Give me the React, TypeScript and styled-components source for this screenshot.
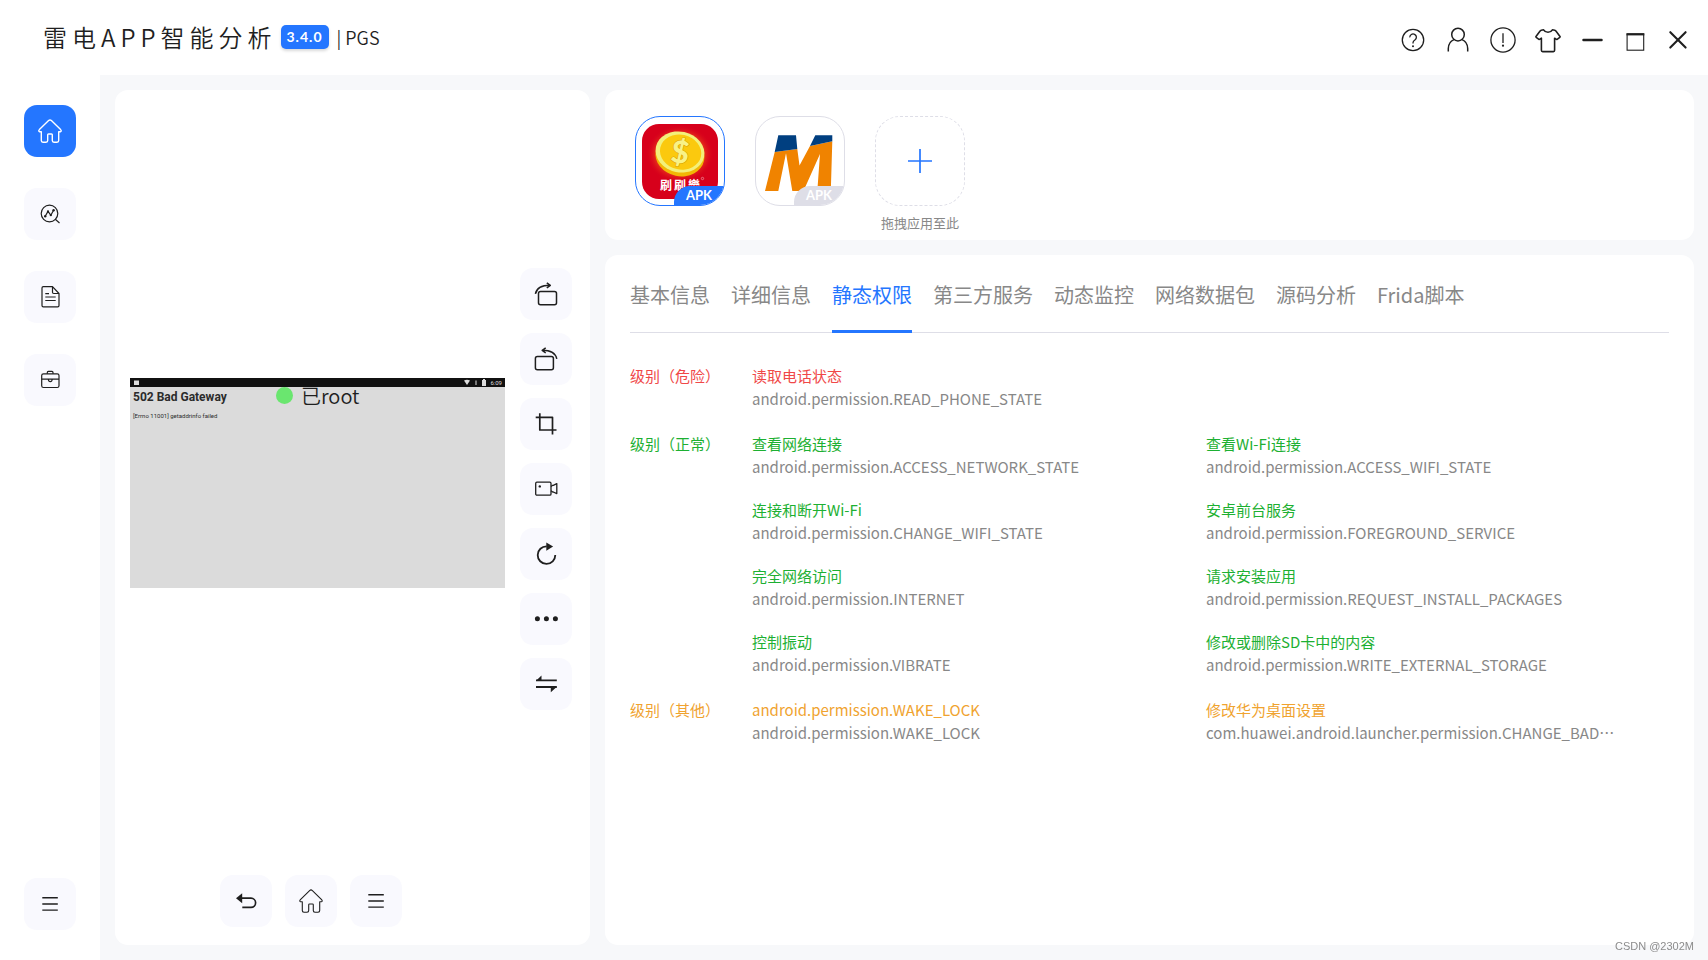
import React from "react";
import styled, { createGlobalStyle, css } from "styled-components";

const GlobalStyle = createGlobalStyle`
  *, *::before, *::after { box-sizing: border-box; }
  body {
    margin: 0;
    background: #fff;
    color: #1f1f1f;
    font-family: "Noto Sans CJK SC", sans-serif;
  }
  button {
    margin: 0;
    padding: 0;
    border: 0;
    background: none;
    color: inherit;
    font: inherit;
    cursor: pointer;
  }
  h1, h2, p, ul, dl, dt, dd { margin: 0; padding: 0; }
  ul { list-style: none; }
  svg { display: block; }
`;

const Window = styled.div`
  display: flex;
  flex-direction: column;
  min-height: 100vh;
`;

/* ---------- header ---------- */

const Header = styled.header`
  display: flex;
  align-items: center;
  justify-content: space-between;
  height: 75px;
  padding: 0 9px 0 43px;
`;

const Brand = styled.div`
  display: flex;
  align-items: center;
  padding-bottom: 2px;
`;

const Title = styled.h1`
  font-size: 24px;
  font-weight: 350;
  line-height: 36px;
  letter-spacing: 5px;
  color: #1f1f1f;
`;

const Version = styled.span`
  height: 24px;
  margin-left: 4px;
  padding: 0 6px;
  border-radius: 5px;
  background: #2476ff;
  box-shadow: 0 2px 3px rgba(0, 0, 0, 0.15);
  color: #fff;
  font-family: Lato, sans-serif;
  font-size: 14px;
  font-weight: 700;
  line-height: 23px;
  letter-spacing: 1px;
`;

const Edition = styled.span`
  margin-left: 8px;
  font-size: 18px;
  font-weight: 350;
  line-height: 24px;
`;

const WindowActions = styled.div`
  display: flex;
  padding-top: 4px;
`;

const WindowButton = styled.button<{ $narrow?: boolean }>`
  display: flex;
  align-items: center;
  justify-content: center;
  width: ${(p) => (p.$narrow ? 43 : 45)}px;
  height: 40px;
`;

/* ---------- frame ---------- */

const Body = styled.div`
  display: flex;
  flex: 1;
`;

const Sidebar = styled.nav`
  display: flex;
  flex-direction: column;
  align-items: center;
  gap: 31px;
  width: 100px;
  padding: 30px 0;
`;

const Tile = styled.button<{ $active?: boolean; $last?: boolean }>`
  display: flex;
  align-items: center;
  justify-content: center;
  width: 52px;
  height: 52px;
  border-radius: 13px;
  background: ${(p) => (p.$active ? "#2476ff" : "#f9f9fe")};
  color: ${(p) => (p.$active ? "#fff" : "#1f1f1f")};
  ${(p) =>
    p.$last &&
    css`
      margin-top: auto;
    `}
`;

const Workspace = styled.main`
  display: flex;
  flex: 1;
  gap: 15px;
  min-width: 0;
  padding: 15px 14px 15px 15px;
  background: #f7f8fa;
`;

const Panel = styled.section`
  border-radius: 13px;
  background: #fff;
`;

/* ---------- device ---------- */

const DevicePanel = styled(Panel)`
  display: flex;
  flex-shrink: 0;
  gap: 15px;
  width: 475px;
  padding: 0 18px 18px 15px;
`;

const DeviceColumn = styled.div`
  display: flex;
  flex: 1;
  flex-direction: column;
`;

const ScreenArea = styled.div`
  display: flex;
  flex: 1;
  align-items: center;
`;

const Screen = styled.div`
  position: relative;
  width: 100%;
  aspect-ratio: 375 / 210;
  background: #dbdbdb;
  color: #2b2b2b;
  font-family: Roboto, sans-serif;
`;

const StatusBar = styled.div`
  display: flex;
  align-items: center;
  gap: 4px;
  height: 9px;
  padding: 0 3px 0 4px;
  background: #111;
  color: #ddd;
  font-size: 6px;
  line-height: 9px;
`;

const StatusSpacer = styled.span`
  flex: 1;
`;

const ErrorTitle = styled.h2`
  padding: 2px 0 0 3px;
  font-size: 12px;
  font-weight: 700;
  line-height: 16px;
`;

const ErrorText = styled.p`
  padding: 7px 0 0 3px;
  font-size: 6px;
  line-height: 8px;
`;

const RootState = styled.div`
  position: absolute;
  top: 4px;
  left: 146px;
  display: flex;
  align-items: center;
  gap: 8px;
  color: #1f1f1f;
  font-family: "Noto Sans CJK SC", sans-serif;
  font-size: 20px;
  font-weight: 350;
  line-height: 28px;
`;

const RootDot = styled.span`
  width: 17px;
  height: 17px;
  border-radius: 50%;
  background: #6ae66f;
`;

const DeviceKeys = styled.div`
  display: flex;
  justify-content: center;
  gap: 13px;
  padding-right: 13px;
`;

const DeviceTools = styled.div`
  display: flex;
  flex-direction: column;
  justify-content: center;
  gap: 13px;
  padding-bottom: 40px;
`;

/* ---------- apps ---------- */

const RightColumn = styled.div`
  display: flex;
  flex: 1;
  flex-direction: column;
  gap: 15px;
  min-width: 0;
`;

const AppsPanel = styled(Panel)`
  display: flex;
  gap: 30px;
  height: 150px;
  padding: 26px 30px 0;
`;

const AppCard = styled.button<{ $selected?: boolean }>`
  position: relative;
  width: 90px;
  height: 90px;
  overflow: hidden;
  border: 1px solid ${(p) => (p.$selected ? "#2476ff" : "#dedee7")};
  border-radius: 25px;
`;

const ApkBadge = styled.span<{ $selected?: boolean }>`
  position: absolute;
  right: 0;
  bottom: 0;
  width: 50px;
  height: 19px;
  padding-right: 12px;
  border-top-left-radius: 16px;
  background: ${(p) => (p.$selected ? "#2476ff" : "#dedee7")};
  color: #fff;
  font-family: Lato, sans-serif;
  font-size: 13px;
  font-weight: 700;
  line-height: 19px;
  text-align: right;
`;

const DropSlot = styled.div`
  display: flex;
  flex-direction: column;
  align-items: center;
  gap: 7px;
  color: #888;
  font-size: 13px;
  line-height: 20px;
`;

const DropButton = styled.button`
  display: flex;
  align-items: center;
  justify-content: center;
  width: 90px;
  height: 90px;
  border: 1px dashed #dedee7;
  border-radius: 25px;
  color: #2476ff;
`;

/* ---------- permissions ---------- */

const InfoPanel = styled(Panel)`
  flex: 1;
  padding: 0 25px 25px;
`;

const Tabs = styled.div`
  display: flex;
  gap: 21px;
  height: 78px;
  border-bottom: 1px solid #dedee7;
`;

const Tab = styled.button<{ $active?: boolean }>`
  height: 78px;
  padding-top: 5px;
  border-bottom: 3px solid ${(p) => (p.$active ? "#2476ff" : "transparent")};
  color: ${(p) => (p.$active ? "#2476ff" : "#888")};
  font-size: 20px;
  line-height: 30px;
  white-space: nowrap;
`;

const Groups = styled.div`
  display: flex;
  flex-direction: column;
  gap: 22px;
  padding-top: 31px;
  font-size: 15px;
  line-height: 23px;
`;

const Group = styled.section<{ $tone: string }>`
  display: grid;
  grid-template-columns: 122px 1fr;
  color: ${(p) => p.$tone};
`;

const GroupLabel = styled.h2`
  font-size: 15px;
  font-weight: 400;
  line-height: 23px;
`;

const Permissions = styled.dl`
  display: grid;
  grid-template-columns: 1fr 1fr;
  row-gap: 20px;
  padding-right: 9px;
`;

const PermissionId = styled.dd`
  color: #888;
`;

const Watermark = styled.footer`
  position: fixed;
  right: 14px;
  bottom: 6px;
  color: #8c8c8c;
  font-family: "Liberation Sans", sans-serif;
  font-size: 11px;
  line-height: 16px;
`;

/* ---------- icons ---------- */

type IconProps = {
  stroke?: number;
  size?: number;
  children: React.ReactNode;
};

const Icon = ({ size = 24, stroke = 1.2, children }: IconProps) => (
  <svg
    width={size}
    height={size}
    viewBox={`0 0 ${size} ${size}`}
    fill="none"
    stroke="currentColor"
    strokeWidth={stroke}
    strokeLinejoin="round"
    aria-hidden="true"
  >
    {children}
  </svg>
);

const HomeIcon = ({ stroke = 1.4 }: { stroke?: number }) => (
  <Icon stroke={stroke}>
    <path d="M10.6 1.6Q12 .3 13.4 1.6L22.6 10.6Q24 12.3 22.4 12.8H20.7V21.5Q20.7 23.2 19 23.2H16Q14.3 23.2 14.3 21.5V15.8Q14.3 15 13.5 15H10.5Q9.7 15 9.7 15.8V21.5Q9.7 23.2 8 23.2H5Q3.3 23.2 3.3 21.5V12.8H1.6Q0 12.3 1.4 10.6Z" />
  </Icon>
);

const AnalyseIcon = () => (
  <Icon>
    <circle cx="11.5" cy="11.5" r="8.3" />
    <path d="M17.3 17.3L21.5 21" />
    <path d="M7.2 14.2L10 9.4L12.8 13.2L15.6 8.2" />
    <g fill="currentColor" stroke="none">
      <circle cx="7.2" cy="14.2" r="1.2" />
      <circle cx="10" cy="9.4" r="1.1" />
      <circle cx="12.8" cy="13.2" r="1.1" />
      <circle cx="15.6" cy="8.2" r="1.2" />
    </g>
  </Icon>
);

const FileIcon = () => (
  <Icon>
    <path d="M14.5 1.7H5.3Q4 1.7 4 3V20.5Q4 21.8 5.3 21.8H19.7Q21 21.8 21 20.5V8.5ZM14.5 1.7V7.3Q14.5 8.5 15.7 8.5H21" />
    <path d="M7.3 8.7H11M7.3 12H17.7M7.3 15.5H17.7" />
  </Icon>
);

const CaseIcon = () => (
  <Icon>
    <rect x="3.7" y="5.8" width="17.3" height="13.7" rx="1.8" />
    <path d="M9.3 5.8V4.4Q9.3 3.4 10.3 3.4H14Q15 3.4 15 4.4V5.8M3.7 11.2H21M10.3 11.2Q10.5 13.6 12.3 13.6Q14 13.6 14.2 11.2" />
  </Icon>
);

const MenuIcon = () => (
  <Icon stroke={1.4}>
    <path d="M4.3 5.8H19.8M4.3 12H19.8M4.3 18.1H19.8" />
  </Icon>
);

const RotateRightIcon = () => (
  <Icon stroke={1.5}>
    <rect x="4.5" y="9.5" width="18" height="13.3" rx="2" />
    <path d="M1.4 11.8Q3.1 3.2 16 3.2M12.8 .8L16.3 3.3L12.8 6" />
  </Icon>
);

const RotateLeftIcon = () => (
  <Icon stroke={1.5}>
    <rect x="1.4" y="9.5" width="18" height="13.3" rx="2" />
    <path d="M22.8 11.8Q20.9 3.2 8.3 3.2M11.7 .8L8.2 3.3L11.7 6" />
  </Icon>
);

const CropIcon = () => (
  <Icon stroke={1.7}>
    <path d="M5.8 1.2V18H22.5M1.7 5.3H18.5V22.4" />
  </Icon>
);

const CameraIcon = () => (
  <Icon stroke={1.3}>
    <rect x="1.7" y="5.2" width="15.3" height="13" rx="1.2" />
    <path d="M17 9.6L18.7 8.3H19.3L22.8 6.6V16.6L19.3 15H18.7L17 13.8" />
    <circle cx="5.8" cy="9.4" r="1.2" fill="currentColor" stroke="none" />
  </Icon>
);

const RefreshIcon = () => (
  <Icon stroke={1.8}>
    <path d="M12.7 4.3A8.8 8.8 0 1 0 21.3 13.1" />
    <path d="M12.3 .5L19.1 4.5L12.3 8.7Z" fill="currentColor" stroke="none" />
  </Icon>
);

const DotsIcon = () => (
  <Icon>
    <g fill="currentColor" stroke="none">
      <circle cx="3.4" cy="11.7" r="2.5" />
      <circle cx="12.4" cy="11.7" r="2.5" />
      <circle cx="21.4" cy="11.7" r="2.5" />
    </g>
  </Icon>
);

const SwapIcon = () => (
  <Icon stroke={1.8}>
    <path d="M2 8.4H22.8M2 15H22.8" />
    <path d="M1.8 8.9L7.5 3.5V8.7ZM22.9 14.7L16.8 20.2V14.7Z" fill="currentColor" stroke="none" />
  </Icon>
);

const BackIcon = () => (
  <Icon stroke={1.7}>
    <path d="M6 9.2H17A4.6 4.6 0 0 1 17 18.4H8.3" />
    <path d="M2 9.3L8.2 4.3V14.3Z" fill="currentColor" stroke="none" />
  </Icon>
);

const HelpIcon = () => (
  <Icon size={26} stroke={1.3}>
    <circle cx="13" cy="13" r="10.7" />
    <path d="M9.8 10.4A3.3 3.3 0 1 1 14.9 13Q13 14.2 13 15.8V16.4" />
    <circle cx="13" cy="19.2" r="1" fill="currentColor" stroke="none" />
  </Icon>
);

const UserIcon = () => (
  <Icon size={26} stroke={1.5}>
    <circle cx="13" cy="7.6" r="6.3" />
    <path d="M3.3 24.6V21.5Q3.6 14.6 9 12.6M22.7 24.6V21.5Q22.4 14.6 17 12.6" />
  </Icon>
);

const AlertIcon = () => (
  <Icon size={26} stroke={1.3}>
    <circle cx="13" cy="13" r="12.1" />
    <path d="M13 6.2V16" />
    <circle cx="13" cy="18.7" r="1.1" fill="currentColor" stroke="none" />
  </Icon>
);

const ShirtIcon = () => (
  <Icon size={26} stroke={1.6}>
    <path d="M8.6 2.8L6.2 3.2Q5.6 3.4 5.1 4L1 9.4Q.7 10 1.2 10.4L3.9 12.3Q4.4 12.6 5 12.2L6.4 11.2V23.3Q6.4 24.6 7.6 24.6H18.4Q19.6 24.6 19.6 23.3V11.2L21 12.2Q21.6 12.6 22.1 12.3L24.8 10.4Q25.3 10 25 9.4L20.9 4Q20.4 3.4 19.8 3.2L17.4 2.8Q16 5.2 13 5.2Q10 5.2 8.6 2.8Z" />
  </Icon>
);

const MinimiseIcon = () => (
  <Icon size={26} stroke={2.5}>
    <path d="M4.5 13H22.5" strokeLinecap="round" />
  </Icon>
);

const MaximiseIcon = () => (
  <Icon size={26} stroke={1.1}>
    <rect x="5.1" y="6.8" width="16.6" height="16.4" strokeLinejoin="miter" />
    <path d="M4.5 7.4H22.3" strokeWidth="2" />
  </Icon>
);

const CloseIcon = () => (
  <Icon size={26} stroke={2.1}>
    <path d="M5.3 5.2L20.6 20.6M20.6 5.2L5.3 20.6" strokeLinecap="round" />
  </Icon>
);

const PlusIcon = () => (
  <Icon size={26} stroke={1.7}>
    <path d="M13 1V25M1 13H25" />
  </Icon>
);

const CoinLogo = () => (
  <svg width="88" height="88" viewBox="1 1 88 88" aria-hidden="true">
    <defs>
      <radialGradient id="glow">
        <stop offset="0.55" stopColor="#ff7a1a" />
        <stop offset="1" stopColor="#d7001b" stopOpacity="0" />
      </radialGradient>
    </defs>
    <rect x="7" y="8" width="76" height="75" rx="17" fill="#d7001b" />
    <ellipse cx="45" cy="38" rx="34" ry="29" fill="url(#glow)" />
    <g transform="rotate(12 45 37)">
      <ellipse cx="45.5" cy="39.6" rx="24.6" ry="20.6" fill="#f2b705" />
      <ellipse cx="44.8" cy="36" rx="24.6" ry="20.4" fill="#f3f07a" />
      <ellipse cx="45.4" cy="36" rx="20.8" ry="17.4" fill="#fbc90e" />
    </g>
    <g
      fontFamily="Lato, sans-serif"
      fontSize="31"
      fontWeight="900"
      textAnchor="middle"
      transform="rotate(8 45 37)"
    >
      <text
        x="45"
        y="47"
        fill="#f8f286"
        stroke="#d99a00"
        strokeWidth="1"
        paintOrder="stroke"
      >
        $
      </text>
    </g>
    <text
      x="25"
      y="74"
      fill="#fff"
      fontFamily="Noto Sans CJK TC, sans-serif"
      fontSize="12"
      fontWeight="700"
      letterSpacing="2"
    >
      刷刷樂
    </text>
    <circle cx="67.5" cy="62.5" r="1.2" fill="none" stroke="#fff" strokeWidth="0.4" />
  </svg>
);

const MerchantLogo = () => (
  <svg width="88" height="88" viewBox="1 1 88 88" aria-hidden="true">
    <path
      fill="#f08300"
      d="M19.7 36L42.3 33L44.5 49.5L55 30L77.3 25.3L75.8 75H62.3L65 38L48.5 75H37.3L31 37.3L23.3 75H10Z"
    />
    <path fill="#003f80" d="M23.3 19.3H41L42.3 33L19.7 36ZM60.3 19.3H77.3V25.3L55 30Z" />
  </svg>
);

const StatusGlyph = ({ d, w }: { d: string; w: number }) => (
  <svg width={w} height="7" viewBox={`0 0 ${w} 7`} fill="#ddd" aria-hidden="true">
    <path d={d} />
  </svg>
);

/* ---------- data ---------- */

const TABS = [
  "基本信息",
  "详细信息",
  "静态权限",
  "第三方服务",
  "动态监控",
  "网络数据包",
  "源码分析",
  "Frida脚本",
];

const WINDOW_ACTIONS = [
  { label: "帮助", icon: <HelpIcon /> },
  { label: "账户", icon: <UserIcon /> },
  { label: "关于", icon: <AlertIcon /> },
  { label: "皮肤", icon: <ShirtIcon /> },
  { label: "最小化", icon: <MinimiseIcon />, narrow: true },
  { label: "最大化", icon: <MaximiseIcon />, narrow: true },
  { label: "关闭", icon: <CloseIcon />, narrow: true },
];

const NAV = [
  { label: "主页", icon: <HomeIcon />, active: true },
  { label: "分析", icon: <AnalyseIcon /> },
  { label: "报告", icon: <FileIcon /> },
  { label: "工具箱", icon: <CaseIcon /> },
];

const TOOLS = [
  { label: "向右旋转", icon: <RotateRightIcon /> },
  { label: "向左旋转", icon: <RotateLeftIcon /> },
  { label: "截图", icon: <CropIcon /> },
  { label: "录屏", icon: <CameraIcon /> },
  { label: "刷新", icon: <RefreshIcon /> },
  { label: "更多", icon: <DotsIcon /> },
  { label: "切换", icon: <SwapIcon /> },
];

const KEYS = [
  { label: "返回", icon: <BackIcon /> },
  { label: "桌面", icon: <HomeIcon stroke={1.1} /> },
  { label: "任务", icon: <MenuIcon /> },
];

const GROUPS = [
  {
    label: "级别（危险）",
    tone: "#f04848",
    items: [{ name: "读取电话状态", id: "android.permission.READ_PHONE_STATE" }],
  },
  {
    label: "级别（正常）",
    tone: "#1db032",
    items: [
      { name: "查看网络连接", id: "android.permission.ACCESS_NETWORK_STATE" },
      { name: "查看Wi-Fi连接", id: "android.permission.ACCESS_WIFI_STATE" },
      { name: "连接和断开Wi-Fi", id: "android.permission.CHANGE_WIFI_STATE" },
      { name: "安卓前台服务", id: "android.permission.FOREGROUND_SERVICE" },
      { name: "完全网络访问", id: "android.permission.INTERNET" },
      { name: "请求安装应用", id: "android.permission.REQUEST_INSTALL_PACKAGES" },
      { name: "控制振动", id: "android.permission.VIBRATE" },
      { name: "修改或删除SD卡中的内容", id: "android.permission.WRITE_EXTERNAL_STORAGE" },
    ],
  },
  {
    label: "级别（其他）",
    tone: "#f0a32f",
    items: [
      { name: "android.permission.WAKE_LOCK", id: "android.permission.WAKE_LOCK" },
      { name: "修改华为桌面设置", id: "com.huawei.android.launcher.permission.CHANGE_BAD⋯" },
    ],
  },
];

/* ---------- page ---------- */

export default function App() {
  return (
    <Window lang="zh-CN">
      <GlobalStyle />
      <Header>
        <Brand>
          <Title>雷电APP智能分析</Title>
          <Version>3.4.0</Version>
          <Edition>| PGS</Edition>
        </Brand>
        <WindowActions>
          {WINDOW_ACTIONS.map((a) => (
            <WindowButton key={a.label} aria-label={a.label} $narrow={a.narrow}>
              {a.icon}
            </WindowButton>
          ))}
        </WindowActions>
      </Header>
      <Body>
        <Sidebar>
          {NAV.map((n) => (
            <Tile key={n.label} aria-label={n.label} $active={n.active}>
              {n.icon}
            </Tile>
          ))}
          <Tile aria-label="菜单" $last>
            <MenuIcon />
          </Tile>
        </Sidebar>
        <Workspace>
          <DevicePanel>
            <DeviceColumn>
              <ScreenArea>
                <Screen>
                  <StatusBar>
                    <StatusGlyph w={5} d="M0 1.5H5V6H0Z" />
                    <StatusSpacer />
                    <StatusGlyph w={6} d="M0 1.5Q3 0 6 1.5L3 6Z" />
                    <StatusGlyph w={4} d="M1.5 1.5H2.5V6H1.5Z" />
                    <StatusGlyph w={4} d="M1 0H3V1H4V7H0V1H1Z" />
                    <span>6:09</span>
                  </StatusBar>
                  <ErrorTitle>502 Bad Gateway</ErrorTitle>
                  <ErrorText>[Errno 11001] getaddrinfo failed</ErrorText>
                  <RootState>
                    <RootDot />
                    已root
                  </RootState>
                </Screen>
              </ScreenArea>
              <DeviceKeys>
                {KEYS.map((k) => (
                  <Tile key={k.label} aria-label={k.label}>
                    {k.icon}
                  </Tile>
                ))}
              </DeviceKeys>
            </DeviceColumn>
            <DeviceTools>
              {TOOLS.map((t) => (
                <Tile key={t.label} aria-label={t.label}>
                  {t.icon}
                </Tile>
              ))}
            </DeviceTools>
          </DevicePanel>
          <RightColumn>
            <AppsPanel>
              <AppCard aria-label="刷刷樂" $selected>
                <CoinLogo />
                <ApkBadge $selected>APK</ApkBadge>
              </AppCard>
              <AppCard aria-label="M">
                <MerchantLogo />
                <ApkBadge>APK</ApkBadge>
              </AppCard>
              <DropSlot>
                <DropButton aria-label="添加应用">
                  <PlusIcon />
                </DropButton>
                拖拽应用至此
              </DropSlot>
            </AppsPanel>
            <InfoPanel>
              <Tabs role="tablist">
                {TABS.map((t) => (
                  <Tab
                    key={t}
                    role="tab"
                    aria-selected={t === "静态权限"}
                    $active={t === "静态权限"}
                  >
                    {t}
                  </Tab>
                ))}
              </Tabs>
              <Groups>
                {GROUPS.map((g) => (
                  <Group key={g.label} $tone={g.tone}>
                    <GroupLabel>{g.label}</GroupLabel>
                    <Permissions>
                      {g.items.map((p) => (
                        <div key={p.id}>
                          <dt>{p.name}</dt>
                          <PermissionId>{p.id}</PermissionId>
                        </div>
                      ))}
                    </Permissions>
                  </Group>
                ))}
              </Groups>
            </InfoPanel>
          </RightColumn>
        </Workspace>
      </Body>
      <Watermark>CSDN @2302M</Watermark>
    </Window>
  );
}
